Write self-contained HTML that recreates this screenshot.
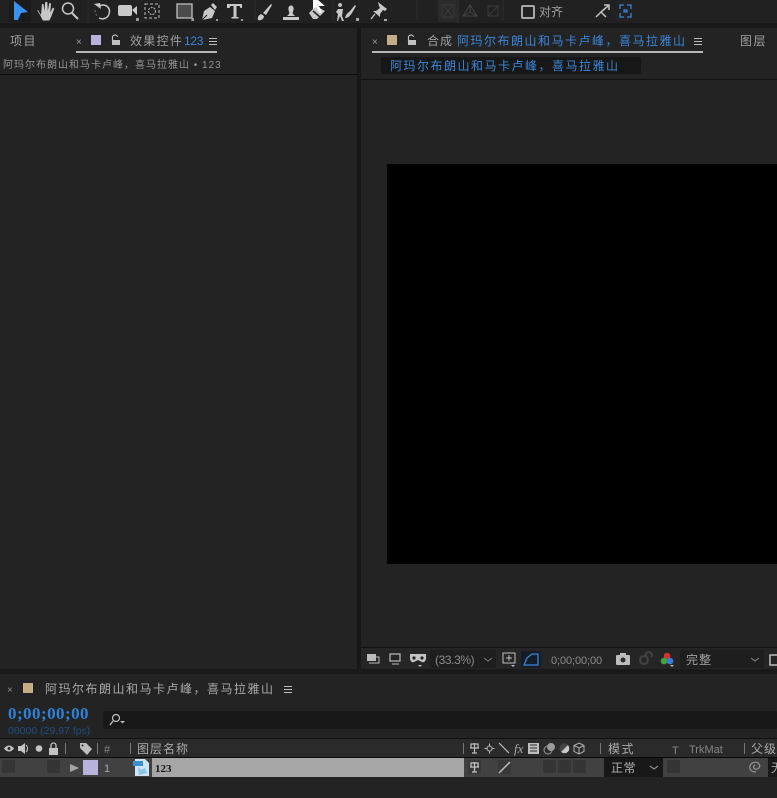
<!DOCTYPE html>
<html><head><meta charset="utf-8"><style>
html,body{margin:0;padding:0;background:#232323;width:777px;height:798px;overflow:hidden}
svg{display:block}
text{font-family:"Liberation Sans","Noto Sans CJK SC",sans-serif;fill:#a0a0a0;font-size:12px}
.zh{letter-spacing:1.5px}
.bl{fill:#3a86d8}
.ic{fill:#c8c8c8}
.st{fill:none;stroke:#c8c8c8;stroke-width:1.5}
</style></head><body>
<svg width="777" height="798" viewBox="0 0 777 798" xmlns="http://www.w3.org/2000/svg">
<rect width="777" height="798" fill="#232323"/>
<!-- toolbar -->
<rect width="777" height="23" fill="#212121"/>
<rect y="23" width="777" height="5" fill="#191919"/>
<rect x="9" y="0" width="22" height="22" fill="#1b1b1b"/>
<path d="M14 1 L28 12 L21 13 L18 20 L14 20 Z" fill="#3a92ee"/>
<path d="M38 10l3 5 1-11 1.500 0 .8 7 1-9 2 0 .5 9 1.500-8 1.700.5-.7 9 2.500-5 1.500 1-3 8-2 4h-6.500l-3-6-2.500-4z" class="ic"/>
<circle cx="68" cy="8.500" r="5.500" class="st"/><path d="M72 13l6 6" stroke="#c8c8c8" stroke-width="2"/>
<path d="M88 0V21M255 0V21M417 0V21M333 0V21M503 0V21" stroke="#2c2c2c"/>
<path d="M99 6c7-3 12 2 10 8-1 4-6 6-10 4" class="st"/><path d="M94 4l6-1 1 6z" class="ic"/><path d="M95 10c0 3 1 5 3 7" fill="none" stroke="#777" stroke-dasharray="2 2"/>
<rect x="118" y="5" width="14" height="11" rx="2" class="ic"/><path d="M132 10l5-4v9z" class="ic"/>
<rect x="145" y="4" width="14" height="14" fill="none" stroke="#bbb" stroke-dasharray="3 2"/><circle cx="152" cy="11" r="3.500" fill="none" stroke="#bbb" stroke-dasharray="2 1"/>
<path d="M136 18l3 0v3h-3zM192 18h2v3h-3zM216 19h2v2h-2zM241 19h2v2h-2z" fill="#999"/>
<rect x="177" y="4" width="15" height="14" fill="#4b4b4b" stroke="#bfbfbf" stroke-width="1.300"/>
<path d="M202 20l2-9 6-4 5 4-3 7zM211 5l2-2 4 4-2 3z" class="ic"/><path d="M202 20l5-5" stroke="#212121"/>
<path d="M227 4h15v4h-1.500l-1-2h-3v11h2v1.500h-7V17h2V6h-3l-1 2H227z" class="ic"/>
<path d="M258 20c-1-3 1-5 3-6l3 2c0 3-3 5-6 4zM263 13l8-9 1 1-6 10z" class="ic"/>
<path d="M283 17h16v3h-16zM287 16l2-2c1-2-1-3-.5-6a2.500 2.500 0 1 1 5 0c.5 3-1.500 4-.5 6l2 2z" class="ic"/>
<path d="M309 13l7-7 9 5-8 8-4 0z" class="ic"/><path d="M313 11l7 6" stroke="#212121" stroke-width="1.500"/>
<path d="M313 0l0 9 3-2 3 6 3-1-3-6h6l-7-6z" fill="#fff"/>
<path d="M340 7a2 2 0 1 1 .1 0M338 9l5 0-1 7 2 5h-2l-2-5-2 5h-1l1-7-2-2zM345 18c1-4 3-5 5-7l5-6 1 1-4 7c-2 3-4 5-7 5z" class="ic"/>
<path d="M378 2l9 7-2 2-2-1-3 4v3l-7-6h3l4-3-1-2z" class="ic"/><path d="M375 14l-4 5" stroke="#c8c8c8" stroke-width="1.300"/>
<path d="M356 18h3v3h-3zM384 19h3v2h-3z" fill="#aaa"/>
<rect x="438" y="0" width="21" height="22" fill="#2a2a2a"/>
<path d="M442 5h12v12h-12zM444 6l8 10M452 6l-8 10" fill="none" stroke="#3a3a3a"/>
<path d="M470 5l-7 11h14zM470 5v7l-7 4M470 12l7 4" fill="none" stroke="#444"/>
<path d="M488 6h10v10h-10zM488 16l10-10" fill="none" stroke="#3c3c3c"/>
<rect x="522" y="6" width="12" height="12" rx="1" fill="none" stroke="#a8a8a8" stroke-width="2"/>
<text x="539" y="16">对齐</text>
<path d="M596 17l5-5 5 5M601 12l7-6M604 5h5v5" fill="none" stroke="#c4c4c4" stroke-width="1.500"/>
<path d="M620 9V5h4M627 5h4v4M631 13v4h-4M624 17h-4v-4M624 10h3v2h-3z" fill="none" stroke="#3a86d8" stroke-width="1.300"/>

<!-- panel separators -->
<rect x="357" y="28" width="4" height="645" fill="#171717"/>
<rect y="669" width="777" height="5" fill="#191919"/>

<!-- left panel -->
<text x="10" y="45" class="zh">项目</text>
<text x="76" y="45" style="font-size:10px">×</text>
<rect x="91" y="35" width="10" height="10" fill="#b7b3dc"/>
<path d="M112.500 41v-3a2.500 2.500 0 0 1 5-1" fill="none" stroke="#c0c0c0" stroke-width="1.200"/><rect x="112" y="40" width="8" height="5" fill="#c0c0c0"/>
<text x="130" y="45" style="letter-spacing:1.300px">效果控件</text>
<text x="184" y="45" class="bl" style="letter-spacing:-.3px">123</text>
<path d="M209 38.500h8M209 41.500h8M209 44.500h8" stroke="#bdbdbd"/>
<rect x="76" y="51" width="141" height="2" fill="#b8b8b8"/>
<text x="3" y="68" style="font-size:10px;letter-spacing:1px;fill:#959595">阿玛尔布朗山和马卡卢峰，喜马拉雅山 • 123</text>
<rect y="74" width="357" height="1" fill="#0c0c0c"/>

<!-- comp panel -->
<text x="372" y="45" style="font-size:10px">×</text>
<rect x="387" y="35" width="10" height="10" fill="#c4ad84"/>
<path d="M408.500 41v-3a2.500 2.500 0 0 1 5-1" fill="none" stroke="#c0c0c0" stroke-width="1.200"/><rect x="408" y="40" width="8" height="5" fill="#c0c0c0"/>
<text x="427" y="45" style="letter-spacing:1px">合成</text>
<text x="457" y="45" class="zh bl">阿玛尔布朗山和马卡卢峰，喜马拉雅山</text>
<path d="M694 38.500h8M694 41.500h8M694 44.500h8" stroke="#bdbdbd"/>
<rect x="372" y="51" width="331" height="2" fill="#b8b8b8"/>
<text x="740" y="45" style="letter-spacing:1.500px">图层</text>
<rect x="381" y="57" width="260" height="17" rx="2" fill="#171717"/>
<text x="390" y="70" class="zh bl">阿玛尔布朗山和马卡卢峰，喜马拉雅山</text>
<rect x="361" y="79" width="416" height="1" fill="#101010"/>
<rect x="387" y="164" width="390" height="400" fill="#000"/>

<!-- comp footer -->
<rect x="361" y="647" width="416" height="1" fill="#111"/>
<rect x="361" y="648" width="416" height="21" fill="#252525"/>
<path d="M367 654h9v7h-9z" fill="#bbb"/><path d="M369 657h10v6h-10" fill="none" stroke="#bbb"/>
<rect x="390" y="654" width="10" height="7" fill="none" stroke="#bbb" stroke-width="1.200"/><path d="M392 664h7" stroke="#bbb"/>
<path d="M410 654h16v4c0 3-2 5-4 4l-4-2-4 2c-2 1-4-1-4-4z" fill="#c4c4c4"/><circle cx="414" cy="658" r="1.600" fill="#222"/><circle cx="422" cy="658" r="1.600" fill="#222"/>
<path d="M418 665h4l-2 2z" fill="#bbb"/>
<rect x="430" y="650" width="66" height="18" fill="#1e1e1e"/>
<text x="435" y="664" style="font-size:12px;letter-spacing:-.4px;fill:#8b8b8b">(33.3%)</text>
<path d="M484 658l4 3 4-3" fill="none" stroke="#7f7f7f"/>
<path d="M503 653h12v10h-12zM509 655v6M506 658h6" fill="none" stroke="#c0c0c0"/><path d="M511 665h4l-2 2z" fill="#bbb"/>
<rect x="521" y="651" width="20" height="17" fill="#141c28"/>
<path d="M524 665l3-7 5-4h6v11z" fill="none" stroke="#3a86d8" stroke-width="1.300"/>
<text x="551" y="664" style="font-size:11px;fill:#8d8d8d;letter-spacing:-.1px">0;00;00;00</text>
<rect x="616" y="655" width="14" height="10" rx="1" fill="#bcbcbc"/><rect x="620" y="653" width="6" height="3" fill="#bcbcbc"/><circle cx="623" cy="660" r="2.500" fill="#2a2a2a"/>
<path d="M640 660a4 4 0 1 1 8 0a4 4 0 1 1-8 0M646 656a3 3 0 1 1 5 1" fill="none" stroke="#444" stroke-width="2"/>
<circle cx="667" cy="656" r="3.300" fill="#d0342c"/><circle cx="664" cy="661" r="3.300" fill="#3aa83a"/><circle cx="670" cy="661" r="3.300" fill="#3f7be0"/>
<path d="M670 665h4l-2 2z" fill="#bbb"/>
<rect x="680" y="650" width="84" height="18" fill="#1e1e1e"/>
<text x="686" y="664" style="letter-spacing:1px;fill:#a2a2a2">完整</text>
<path d="M751 658l4 3 4-3" fill="none" stroke="#8a8a8a"/>
<rect x="770" y="655" width="10" height="10" fill="none" stroke="#bbb" stroke-width="1.500"/>

<!-- timeline header -->
<text x="7" y="693" style="font-size:10px;fill:#8d8d8d">×</text>
<rect x="23" y="683" width="10" height="10" fill="#c4ad84"/>
<text x="45" y="693" class="zh" style="fill:#a8a8a8">阿玛尔布朗山和马卡卢峰，喜马拉雅山</text>
<path d="M284 686.500h8M284 689.500h8M284 692.500h8" stroke="#bdbdbd"/>
<text x="8" y="719" style="font-family:'Liberation Serif',serif;font-weight:bold;font-size:17px;fill:#2f82d8;letter-spacing:.45px">0;00;00;00</text>
<text x="8" y="734" style="font-size:10.500px;fill:#1f4f85">00000 (29.97 fps)</text>
<rect x="103" y="711" width="674" height="18" rx="2" fill="#181818"/>
<circle cx="116" cy="718" r="3.500" fill="none" stroke="#c0c0c0" stroke-width="1.200"/><path d="M113 721l-3 4" stroke="#c0c0c0" stroke-width="1.300"/><path d="M120 721h5l-2.500 2.500z" fill="#bbb"/>

<!-- column header -->
<rect y="738" width="777" height="1" fill="#111"/>
<rect y="739" width="777" height="18" fill="#2a2a2a"/>
<rect y="757" width="777" height="1" fill="#080808"/>
<path d="M4 748.500c3-4 7-4 10 0c-3 4-7 4-10 0z" fill="#c4c4c4"/><circle cx="9" cy="748.500" r="1.500" fill="#2a2a2a"/>
<path d="M18 746h3l4-3v11l-4-3h-3z" fill="#c4c4c4"/><path d="M26 745c2 2 2 5 0 7" fill="none" stroke="#c4c4c4"/>
<circle cx="39" cy="748.500" r="3.300" fill="#c4c4c4"/>
<rect x="49" y="748" width="9" height="7" fill="#c4c4c4"/><path d="M51 748v-2.500a2.500 2.500 0 0 1 5 0V748" fill="none" stroke="#c4c4c4" stroke-width="1.300"/>
<path d="M65.500 743v11M97.500 743v11M130.500 743v11M463.500 743v11M600.500 743v11M744.500 743v11" stroke="#777"/>
<path d="M80 743h6l6 6-5 6-7-7z" fill="#bdbdbd"/><circle cx="82.500" cy="745.500" r="1" fill="#2a2a2a"/>
<text x="104" y="753" style="font-size:11px;fill:#8a8a8a">#</text>
<text x="137" y="753" style="letter-spacing:1px;fill:#aaa">图层名称</text>
<path d="M470 748h9M474.500 743v10M471 744h7v4h-7zM472 753h5" fill="none" stroke="#bdbdbd" stroke-width="1.200"/>
<circle cx="489.500" cy="748.500" r="2.500" fill="none" stroke="#bdbdbd"/><path d="M489.500 743.500v2M489.500 751.500v2M484.500 748.500h2M492.500 748.500h2" stroke="#bdbdbd"/>
<path d="M499 743l10 10" stroke="#bdbdbd" stroke-width="1.200"/>
<text x="514" y="753" style="font-family:'Liberation Serif',serif;font-style:italic;font-size:13px;fill:#a8a8a8">fx</text>
<rect x="528" y="743" width="11" height="11" fill="#bdbdbd"/><path d="M530 745h7M530 748h7M530 751h7" stroke="#2a2a2a"/>
<circle cx="548" cy="750" r="4" fill="none" stroke="#999"/><circle cx="551" cy="747" r="4" fill="#9a9a9a"/>
<circle cx="564.500" cy="748.500" r="4.800" fill="#c8c8c8"/><path d="M561 752a4.800 4.800 0 0 1 7-7z" fill="#444"/>
<path d="M579 743l5 2.500v6l-5 2.500-5-2.500v-6zM574 745.500l5 2.500 5-2.500M579 748v6" fill="none" stroke="#b0b0b0"/>
<text x="608" y="753" style="letter-spacing:1.500px;fill:#aaa">模式</text>
<text x="672" y="754" style="font-size:11px;fill:#858585">T</text>
<text x="689" y="753" style="font-size:11px;fill:#858585">TrkMat</text>
<text x="751" y="753" style="letter-spacing:1px;fill:#aaa">父级</text>

<!-- layer row -->
<rect y="758" width="777" height="19" fill="#414141"/>
<rect x="2" y="760" width="13" height="13" fill="#353535"/>
<rect x="47" y="760" width="13" height="13" fill="#353535"/>
<path d="M70 764l9 4-9 4z" fill="#a8a8a8"/>
<rect x="83" y="760" width="15" height="15" fill="#b7b3dc"/>
<text x="104" y="772" style="font-size:11px;fill:#a8a8a8">1</text>
<path d="M135 759h10l4 4v13h-14z" fill="#cfe4f4"/><path d="M138 767l3 3 4-2 2 5-8 2z" fill="#8cc4ea"/>
<rect x="133" y="761" width="10" height="5" fill="#3a8fd0"/>
<rect x="152" y="758" width="312" height="19" fill="#a6a6a6"/>
<text x="155" y="772" style="font-family:'Liberation Serif',serif;font-weight:bold;font-size:11px;fill:#161616">123</text>
<rect x="468" y="760" width="13" height="14" fill="#383838"/>
<path d="M470 767h9M474.500 762v10M471 763h7v4h-7zM472 772h5" fill="none" stroke="#c4c4c4" stroke-width="1.200"/>
<rect x="498" y="760" width="13" height="14" fill="#383838"/><path d="M499 773l11-11" stroke="#c0c0c0" stroke-width="1.500"/>
<rect x="543" y="760" width="13" height="13" fill="#353535"/><rect x="558" y="760" width="13" height="13" fill="#353535"/><rect x="573" y="760" width="13" height="13" fill="#353535"/>
<rect x="604" y="758" width="59" height="19" fill="#181818"/>
<text x="611" y="772" style="letter-spacing:.5px;fill:#b0b0b0">正常</text>
<path d="M650 766l4 3 4-3" fill="none" stroke="#a8a8a8"/>
<rect x="667" y="760" width="13" height="13" fill="#353535"/>
<path d="M756 772c-5 0-7-3-6-6 1-4 7-5 9-2 2 3-1 6-4 5-2-1-2-3 0-4" fill="none" stroke="#8d8d8d" stroke-width="1.300"/>
<rect x="768" y="758" width="9" height="19" fill="#181818"/>
<text x="771" y="772" style="fill:#b0b0b0">无</text>
</svg>
</body></html>
